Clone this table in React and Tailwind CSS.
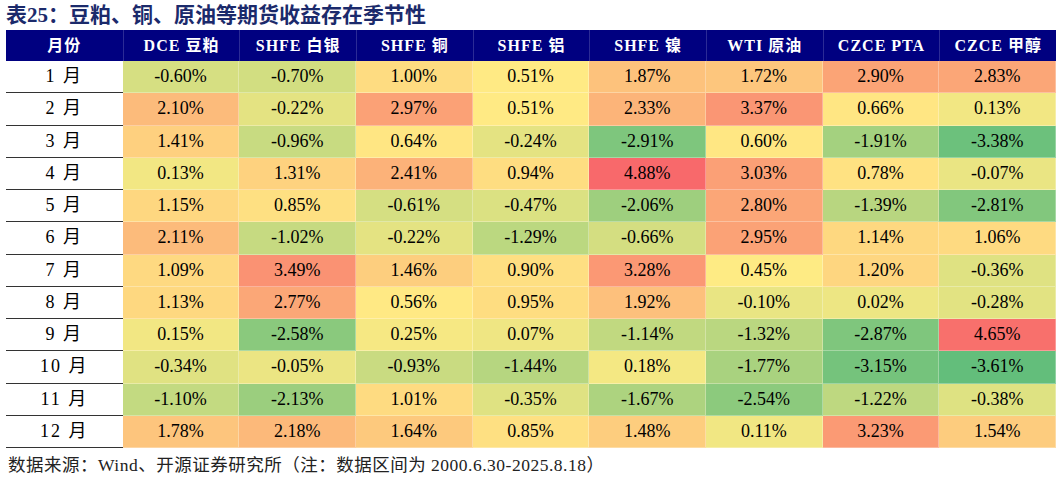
import React from "react";

const headers = ["月份", "DCE 豆粕", "SHFE 白银", "SHFE 铜", "SHFE 铝", "SHFE 镍", "WTI 原油", "CZCE PTA", "CZCE 甲醇"];

const rows = [
  [-0.6, -0.7, 1.0, 0.51, 1.87, 1.72, 2.9, 2.83],
  [2.1, -0.22, 2.97, 0.51, 2.33, 3.37, 0.66, 0.13],
  [1.41, -0.96, 0.64, -0.24, -2.91, 0.6, -1.91, -3.38],
  [0.13, 1.31, 2.41, 0.94, 4.88, 3.03, 0.78, -0.07],
  [1.15, 0.85, -0.61, -0.47, -2.06, 2.8, -1.39, -2.81],
  [2.11, -1.02, -0.22, -1.29, -0.66, 2.95, 1.14, 1.06],
  [1.09, 3.49, 1.46, 0.9, 3.28, 0.45, 1.2, -0.36],
  [1.13, 2.77, 0.56, 0.95, 1.92, -0.1, 0.02, -0.28],
  [0.15, -2.58, 0.25, 0.07, -1.14, -1.32, -2.87, 4.65],
  [-0.34, -0.05, -0.93, -1.44, 0.18, -1.77, -3.15, -3.61],
  [-1.1, -2.13, 1.01, -0.35, -1.67, -2.54, -1.22, -0.38],
  [1.78, 2.18, 1.64, 0.85, 1.48, 0.11, 3.23, 1.54],
];

// excel style 3-colour scale: green - yellow (median) - red
const all = rows.flat().sort((a, b) => a - b);
const min = all[0];
const max = all[all.length - 1];
const mid = (all[all.length / 2 - 1] + all[all.length / 2]) / 2;

const GREEN = [99, 190, 123];
const YELLOW = [255, 235, 132];
const RED = [248, 105, 107];

function mix(a, b, t) {
  return a.map((v, i) => Math.round(v + (b[i] - v) * t));
}

function cellColor(v) {
  const c = v <= mid ? mix(GREEN, YELLOW, (v - min) / (mid - min)) : mix(YELLOW, RED, (v - mid) / (max - mid));
  return `rgb(${c[0]}, ${c[1]}, ${c[2]})`;
}

const App = () => {
  return (
    <div className="w-[1061px] h-[478px] bg-white font-['Liberation_Serif','Noto_Sans_CJK_SC',serif] text-black">
      <div className="pl-[6px] pt-[2px] h-[30px] text-[21px] leading-[26px] font-bold text-[#1b2a6b]">
        表25：豆粕、铜、原油等期货收益存在季节性
      </div>

      <div className="ml-[6px] w-[1050px]">
        <div className="grid grid-cols-9 h-[31px] bg-[#000080]">
          {headers.map((h, i) => (
            <div
              key={h}
              className={`flex items-center justify-center text-white font-bold text-[16px] tracking-[1px] ${i > 0 ? "border-l border-[#2b2b96]" : ""}`}
            >
              {h}
            </div>
          ))}
        </div>

        {rows.map((r, ri) => (
          <div key={ri} className="grid grid-cols-9 h-[32.25px]">
            <div className="flex items-center justify-center border-b border-[#333] text-[18px] tracking-[2px]">
              {ri + 1} 月
            </div>
            {r.map((v, ci) => (
              <div
                key={ci}
                className="flex items-center justify-center text-[18px] border-r border-b border-white/30"
                style={{ backgroundColor: cellColor(v) }}
              >
                {v.toFixed(2)}%
              </div>
            ))}
          </div>
        ))}
      </div>

      <div className="pl-[8px] mt-[6px] text-[17.5px] leading-[22px] tracking-[0.5px] text-[#222]">
        数据来源：Wind、开源证券研究所（注：数据区间为 2000.6.30-2025.8.18）
      </div>
    </div>
  );
};

export default App;
